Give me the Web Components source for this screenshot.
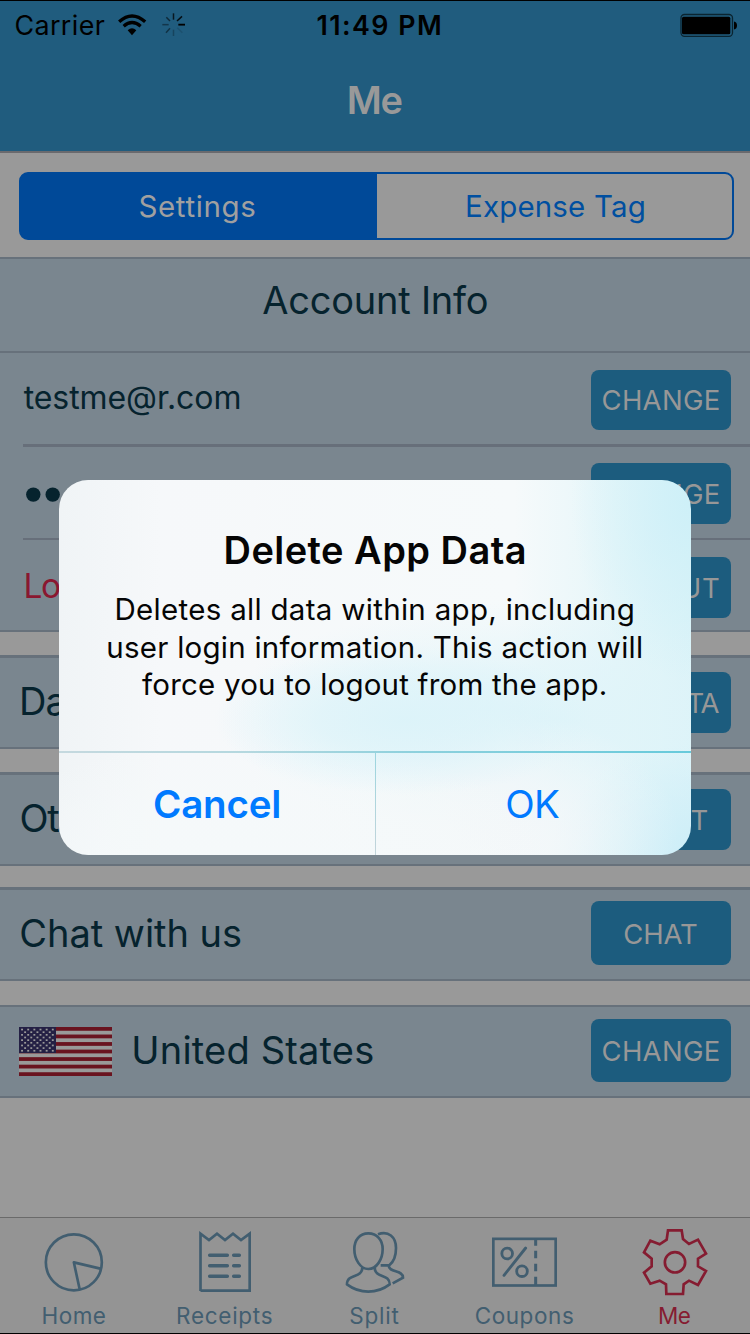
<!DOCTYPE html>
<html lang="en">
<head>
<meta charset="utf-8">
<title>Me</title>
<style>
html,body{margin:0;padding:0;background:#999;overflow:hidden}
body{font-family:Inter,"Liberation Sans",sans-serif;width:750px;height:1334px}
</style>
</head>
<body>
<me-screen></me-screen>
<script>
const define = (name, html, setup) => {
  const tpl = document.createElement('template');
  tpl.innerHTML = html;
  customElements.define(name, class extends HTMLElement {
    connectedCallback() {
      if (this.shadowRoot) return;
      this.attachShadow({mode: 'open'}).append(tpl.content.cloneNode(true));
      if (setup) setup.call(this, this.shadowRoot);
    }
  });
};

/* A single line of text whose visible glyphs span `w` pixels; the box is 40px high. */
const ctx = document.createElement('canvas').getContext('2d');
customElements.define('fit-text', class extends HTMLElement {
  connectedCallback() {
    if (this.shadowRoot) return;
    const size = this.getAttribute('size'), weight = this.getAttribute('weight') || 400;
    const text = this.getAttribute('text') || '';
    ctx.font = `${weight} ${size}px Inter`;
    const m = ctx.measureText(text);
    const ink = m.actualBoundingBoxLeft + m.actualBoundingBoxRight;
    const w = this.hasAttribute('w') ? +this.getAttribute('w') : ink;
    const ls = (w - 0.8 - ink) / Math.max(1, text.length - 1);
    const root = this.attachShadow({mode: 'open'});
    root.innerHTML = `<style>
      :host{display:block;flex:none;width:${w}px;height:40px;line-height:40px;white-space:pre;font-size:${size}px;font-weight:${weight}}
      span{display:block;width:max-content;letter-spacing:${ls.toFixed(3)}px;margin-left:${m.actualBoundingBoxLeft.toFixed(2)}px}
    </style><span></span>`;
    root.querySelector('span').textContent = text;
  }
});

define('status-bar', `<style>
:host{display:flex;height:50px;color:#000;align-items:flex-start}
.left{display:flex;width:302px;margin-left:15.5px;flex:none}
fit-text{margin-top:3.5px}
.wifi{margin:11px 0 0 11.5px}.spin{margin:11px 0 0 12px}
.bat{margin:12px 0 0 239.3px}
</style>
<div class="left"><fit-text text="Carrier" size="26.8" w="90"></fit-text>
<svg class="wifi" width="32" height="26" viewBox="350 36 96 78" fill="none" stroke="#000" stroke-width="10"><path d="M356.500 65.500Q395 30 434.500 65.500M370 78.500Q395 57 421 78.500"/><path d="M382 91Q395 79 408 91L395 106Z" fill="#000" stroke="none"/></svg>
<svg class="spin" width="26" height="28" viewBox="482 36 78 84" stroke="#000" stroke-width="4.500"><path d="M534 74h20" stroke-width="5.500"/><path d="M530 63l15-14" opacity=".85"/><path d="M519.500 59V40" opacity=".75"/><path d="M509 63l-11-11" opacity=".55"/><path d="M505 74h-19" opacity=".4"/><path d="M509 85l-12 13" opacity=".45"/><path d="M519.500 89v19" opacity=".25"/><path d="M531 83l15 15" opacity=".12"/></svg></div>
<fit-text text="11:49 PM" size="26.8" weight="600" w="123.2"></fit-text>
<svg class="bat" width="60" height="25" viewBox="680 13 60 25"><rect x="681" y="14.500" width="51.500" height="21.800" rx="3.500" fill="none" stroke="#0a2430" stroke-width="1.300"/><rect x="682" y="16.700" width="48.300" height="17.500" rx="1.500"/><path d="M734 21.500q3 .5 3 4t-3 4z"/></svg>`);

define('nav-header', `<style>
:host{display:block;height:153px;box-sizing:border-box;background:#205c7e;border-top:1px solid #000;border-bottom:2px solid #6a6a6e;color:#999}
.t{margin:28.500px 0 0 348.800px}
</style><status-bar></status-bar><fit-text class="t" text="Me" size="38" weight="600" w="53.500"></fit-text>`);

define('segment-control', `<style>
:host{display:flex;box-sizing:border-box;height:68px;margin:19px 16px 17px 19px;border:2px solid #004998;border-radius:9px;background:linear-gradient(90deg,#004998 356px,#999 356px);color:#004fa0}
.on{width:356px;color:#a0a0a0;flex:none}
.on fit-text{margin:11.500px 0 0 118.500px}.off fit-text{margin:11.500px 0 0 90px}
</style><div class="on"><fit-text text="Settings" size="29.500" w="116.500"></fit-text></div><div class="off"><fit-text text="Expense Tag" size="29.500" w="177.500"></fit-text></div>`);

define('action-button', `<style>
:host{display:flex;justify-content:center;align-items:flex-start;width:140px;flex:none;border-radius:8px;background:#1c5c7e;color:#979797}
.label{margin-top:10.500px}
</style><div class="label"></div>`, function (r) {
  const n = document.createElement('fit-text');
  n.setAttribute('text', this.getAttribute('text'));
  n.setAttribute('w', this.getAttribute('w'));
  n.setAttribute('size', '27.5');
  n.setAttribute('weight', '370');
  r.querySelector('.label').append(n);
});

/* Row: label on the left, action button on the right. */
define('setting-row', `<style>
:host{display:flex;box-sizing:border-box;background:#7a868f;color:#06232e;padding-right:19px;justify-content:space-between;align-items:flex-start;overflow:hidden}
.l{display:flex;align-items:flex-start}
</style><div class="l"><slot></slot></div><slot name="action"></slot>`);

define('us-flag', `<style>:host{display:block;width:93px;height:49px;flex:none}svg{display:block}</style>
<svg width="93" height="49" viewBox="0 0 93 49"><rect width="93" height="49" fill="#999"/><g id="s" fill="#69131f"></g><rect width="37" height="26" fill="#242044"/><g id="p" fill="#999"></g></svg>`, function (r) {
  let s = '', p = '';
  for (let i = 0; i < 7; i++) s += `<rect y="${(i * 7.54).toFixed(2)}" width="93" height="3.77"/>`;
  for (let y = 0; y < 9; y++) for (let x = 0; x < (y % 2 ? 5 : 6); x++)
    p += `<rect x="${(2.1 + x * 6.15 + (y % 2 ? 3.07 : 0)).toFixed(2)}" y="${(1.7 + y * 2.65).toFixed(2)}" width="1.9" height="1.7"/>`;
  r.querySelector('#s').innerHTML = s;
  r.querySelector('#p').innerHTML = p;
});

define('settings-list', `<style>
:host{display:block}
.line{height:2px;background:#67717b}.t3{height:3px}.in{background:#7a868f;padding-left:23px}.in i{display:block;height:2px;background:#676f7a}.in.t3 i{height:3px}
.gap{background:#999}
.head{height:92px;background:#7a868f;color:#06232e;display:flow-root}
</style>
<div class="line"></div>
<div class="head"><fit-text style="margin:21px 0 0 262.300px" text="Account Info" size="38" w="225.300"></fit-text></div>
<div class="line"></div>
<setting-row style="height:91px"><fit-text style="margin:25px 0 0 23.700px" text="testme@r.com" size="32" w="216.500"></fit-text><action-button slot="action" style="margin-top:16.500px;height:60.500px" text="CHANGE" w="117"></action-button></setting-row>
<div class="in t3"><i></i></div>
<setting-row style="height:91px"><svg style="margin:39px 0 0 25px" width="150" height="18" fill="#06232e"><circle cx="8.300" cy="8.600" r="7.200"/><circle cx="27.700" cy="8.600" r="7.200"/><circle cx="47.100" cy="8.600" r="7.200"/><circle cx="66.500" cy="8.600" r="7.200"/><circle cx="85.900" cy="8.600" r="7.200"/><circle cx="105.300" cy="8.600" r="7.200"/></svg><action-button slot="action" style="margin-top:16px;height:61px" text="CHANGE" w="117"></action-button></setting-row>
<div class="in"><i></i></div>
<setting-row style="height:90px;color:#8a1730"><fit-text style="margin:25.600px 0 0 25.500px" text="Logout" size="33.500" w="102"></fit-text><action-button slot="action" style="margin-top:17px;height:61px" text="LOGOUT" w="117.500"></action-button></setting-row>
<div class="line"></div><div class="gap" style="height:23px"></div><div class="line t3"></div>
<setting-row style="height:89px"><fit-text style="margin:23.300px 0 0 22px" text="Data" size="38" w="75.500"></fit-text><action-button slot="action" style="margin-top:14px;height:61px" text="DEL DATA" w="118.500"></action-button></setting-row>
<div class="line"></div><div class="gap" style="height:23px"></div><div class="line t3"></div>
<setting-row style="height:89px"><fit-text style="margin:23px 0 0 21.500px" text="Other" size="38" w="94"></fit-text><action-button slot="action" style="margin-top:14px;height:61px" text="ABOUT" w="94.500"></action-button></setting-row>
<div class="line"></div><div class="gap" style="height:21px"></div><div class="line t3"></div>
<setting-row style="height:89px"><fit-text style="margin:23px 0 0 21.300px" text="Chat with us" size="38" w="220.500"></fit-text><action-button slot="action" style="margin-top:11px;height:64px;padding-top:2px;box-sizing:border-box" text="CHAT" w="73.400"></action-button></setting-row>
<div class="line"></div><div class="gap" style="height:24px"></div><div class="line"></div>
<setting-row style="height:89px"><us-flag style="margin:20px 0 0 19px"></us-flag><fit-text style="margin:22.500px 0 0 22.300px" text="United States" size="38" w="239.700"></fit-text><action-button slot="action" style="margin-top:12px;height:63px;padding-top:1.500px;box-sizing:border-box" text="CHANGE" w="117"></action-button></setting-row>
<div class="line"></div>`);

define('tab-item', `<style>
:host{display:flex;flex-direction:column;width:150px;height:115px;color:#425e70;overflow:hidden}
:host([active]){color:#851c31}
::slotted(svg){display:block;flex:none;fill:none;stroke:currentColor;stroke-width:8}
.l{display:block;flex:none}
</style><slot></slot><span class="l"></span>`, function (r) {
  const n = document.createElement('fit-text');
  for (const k of ['text', 'w']) n.setAttribute(k, this.getAttribute(k));
  n.setAttribute('size', '22.5');
  n.setAttribute('weight', '430');
  n.style.marginLeft = this.getAttribute('left') + 'px';
  n.style.marginTop = '-1.7px';
  r.querySelector('.l').append(n);
});

define('tab-bar', `<style>
:host{display:flex;box-sizing:border-box;height:117px;background:#949494;border-top:1px solid #6a6a6a;border-bottom:1px solid #000}
</style>
<tab-item text="Home" w="64" left="42.600"><svg width="150" height="80" viewBox="0 39 450 240"><circle cx="221.500" cy="172" r="84"/><path d="M301 191L221.500 172L239 253" stroke-linejoin="round"/></svg></tab-item>
<tab-item text="Receipts" w="95.500" left="27"><svg width="150" height="80" viewBox="450 39 450 240"><path d="M601.500 258V86L627 105L651 86L675 105L699 86L723 105L749 86V257H601.500"/><path d="M629 150.500H682M701 150.500h17M629 182H682M701 182h17M629 213.500H682M701 213.500h17" stroke-width="10.500" stroke-linecap="round"/></svg></tab-item>
<tab-item text="Split" w="49" left="50.200"><svg width="150" height="80" viewBox="60 39 450 240"><path d="M265 85C239 85 223 105 223 132C223 163 241 192 265 192C290 192 308 163 308 132C308 105 291 85 265 85Z"/><path d="M247 187C247 222 201 204 201 238C239 267 291 267 329 238C329 204 284 222 284 187"/><path d="M294 88C325 76 348 96 348 129C348 152 340 171 328 181H302M326 181C326 205 369 193 369 218L338 235"/></svg></tab-item>
<tab-item text="Coupons" w="98" left="25.700"><svg width="150" height="80" viewBox="510 39 450 240"><rect x="640" y="101.500" width="187" height="140"/><path d="M767 104V122M767 137V160M767 176V199M767 215V240" stroke-width="9"/><circle cx="681.500" cy="145.500" r="16" stroke-width="8.500"/><circle cx="726" cy="198.500" r="16" stroke-width="8.500"/><path d="M737 129L672 211" stroke-linecap="round" stroke-width="8.500"/></svg></tab-item>
<tab-item active text="Me" w="32.500" left="59"><svg width="150" height="80" viewBox="180 39 450 240"><path d="M384 76H425L429 102L447 117L474 104L498 146L474 161V184L498 198L474 240L447 227L431 238L429 267H379L378 238L359 227L331 236L312 203L335 184V161L312 142L331 107L359 118L380 104Z"/><circle cx="405" cy="172" r="30.500"/></svg></tab-item>`);

define('alert-dialog', `<style>
:host{position:absolute;left:59px;top:480px;width:632px;height:374.500px;border-radius:29px;overflow:hidden;display:flex;flex-direction:column;color:#050505;
background:
radial-gradient(ellipse 190px 75px at 345px 240px,#dbf3f9e0 0,#dbf3f9a0 45%,#dbf3f900 100%),
radial-gradient(ellipse 300px 130px at 200px 385px,#f5f9fa 0,#f5f9fad0 50%,#f5f9fa00 100%),
radial-gradient(ellipse 190px 120px at 430px 350px,#f3f7f9 0,#f3f7f9a0 45%,#f3f7f900 100%),
radial-gradient(ellipse 140px 110px at 632px 375px,#cdeef8 0,#cdeef800 100%),
radial-gradient(ellipse 120px 180px at 632px 20px,#cef0f8 0,#cef0f800 100%),
radial-gradient(ellipse 330px 120px at 490px 240px,#dff4f9 0,#dff4f9a0 45%,#dff4f900 100%),
linear-gradient(90deg,#f0f4f6 0,#f6f8fa 16%,#f6fafb 72%,#e6f6f9 88%,#dbf3f8 100%)}
.body{height:271px;flex:none;display:flow-root}
.line{height:2px;flex:none;background:linear-gradient(90deg,#c5d9df 0,#b4d8df 30%,#8fd1dd 55%,#67cadb 100%)}
.acts{display:flex;height:102px;color:#007aff}
.c{width:316px;flex:none}
.v{width:1px;background:linear-gradient(#9bd5df,#c3d4da)}
</style>
<div class="body">
<fit-text style="margin:50px 0 0 166.500px" text="Delete App Data" size="38" weight="600" w="300"></fit-text>
<fit-text style="margin:19px 0 0 57.500px" text="Deletes all data within app, including" size="29.500" w="517"></fit-text>
<fit-text style="margin:-2.500px 0 0 49.300px" text="user login information. This action will" size="29.500" w="533.500"></fit-text>
<fit-text style="margin:-2.500px 0 0 83px" text="force you to logout from the app." size="29.500" w="464.500"></fit-text>
</div>
<div class="line"></div>
<div class="acts"><div class="c"><fit-text style="margin:31px 0 0 95px" text="Cancel" size="38.500" weight="600" w="126"></fit-text></div><div class="v"></div><div><fit-text style="margin:31.300px 0 0 131.300px" text="OK" size="38.500" w="52.500"></fit-text></div></div>`);

define('me-screen', `<style>
:host{display:flex;flex-direction:column;position:relative;width:750px;height:1334px;background:#999}
.fill{flex:1}
</style><nav-header></nav-header><segment-control></segment-control><settings-list></settings-list><div class="fill"></div><tab-bar></tab-bar><alert-dialog></alert-dialog>`);
</script>
</body>
</html>
